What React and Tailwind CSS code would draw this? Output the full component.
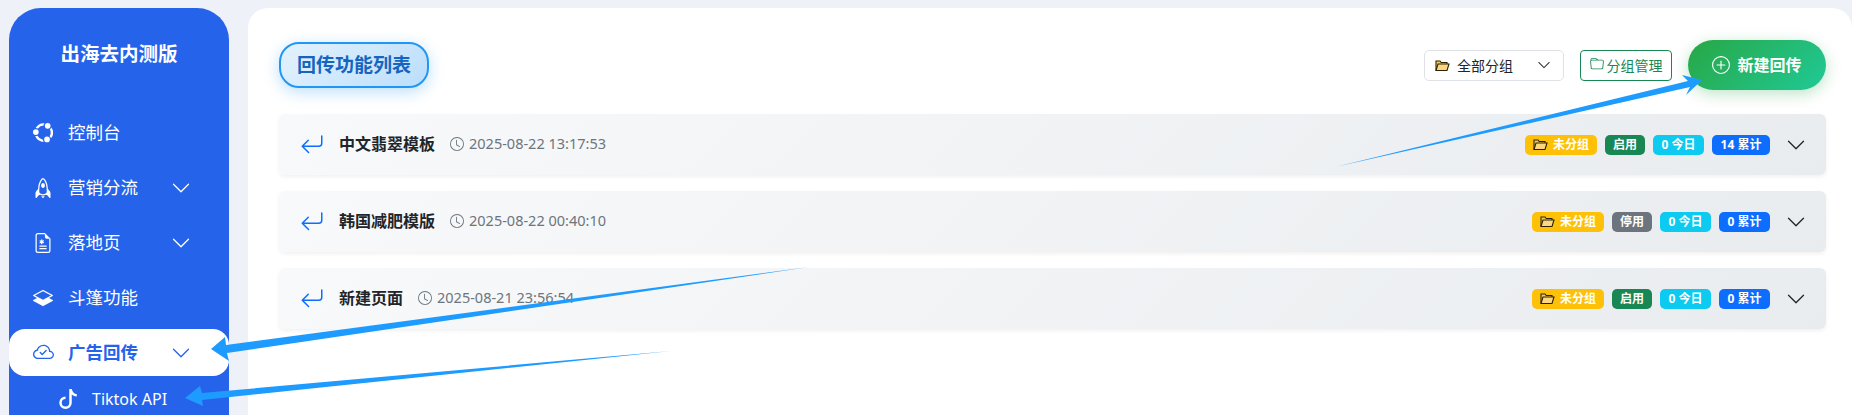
import {
  BsUbuntu,
  BsRocket,
  BsFileEarmarkMedical,
  BsLayersHalf,
  BsCloudCheck,
  BsChevronDown,
  BsTiktok,
  BsArrowReturnLeft,
  BsClock,
  BsFolder,
  BsPlusCircle,
} from "react-icons/bs";

const menu = [
  { label: "控制台", icon: BsUbuntu },
  { label: "营销分流", icon: BsRocket, arrow: true },
  { label: "落地页", icon: BsFileEarmarkMedical, arrow: true },
  { label: "斗篷功能", icon: BsLayersHalf },
];

const rows = [
  { name: "中文翡翠模板", time: "2025-08-22 13:17:53", on: true, today: 0, total: 14 },
  { name: "韩国减肥模版", time: "2025-08-22 00:40:10", on: false, today: 0, total: 0 },
  { name: "新建页面", time: "2025-08-21 23:56:54", on: true, today: 0, total: 0 },
];

// Colour folder, stands in for the emoji in the original
function FolderIcon() {
  return (
    <svg width="15" height="13" viewBox="0 0 15 13" className="shrink-0">
      <path d="M1 11.5V2h4l1.2 1.5H12V5" fill="#f6c95f" stroke="#2a2208" strokeWidth="1.1" />
      <path d="M1 11.5 3 5h11l-2 6.5z" fill="#fdd77e" stroke="#2a2208" strokeWidth="1.1" />
    </svg>
  );
}

function Badge({ className, children }) {
  return (
    <span className={`flex h-[20px] items-center justify-center gap-[5px] rounded-[5px] text-[12px] font-bold text-white ${className}`}>
      {children}
    </span>
  );
}

function Row({ row }) {
  return (
    <div className="flex h-[61px] items-center rounded-[6px] bg-[linear-gradient(135deg,#f8f9fa,#e9ecef)] pl-[21px] pr-[20px] shadow-[0_2px_4px_rgba(0,0,0,0.06)]">
      <BsArrowReturnLeft className="h-[24px] w-[24px] text-[#0d6efd]" />
      <span className="mb-[2px] ml-[15px] text-[16px] font-semibold text-[#212529]">{row.name}</span>
      <span className="mb-[2px] ml-[15px] flex items-center gap-[5px] text-[14.5px] text-[#6c757d]">
        <BsClock className="h-[14px] w-[14px]" />
        {row.time}
      </span>
      <div className="ml-auto flex items-center gap-[8px]">
        <Badge className="w-[72px] bg-[#ffc107]">
          <FolderIcon />
          未分组
        </Badge>
        <Badge className={row.on ? "w-[40px] bg-[#198754]" : "w-[40px] bg-[#6c757d]"}>{row.on ? "启用" : "停用"}</Badge>
        <Badge className="w-[51px] bg-[#0dcaf0]">{row.today} 今日</Badge>
        <Badge className={row.total > 9 ? "w-[58px] bg-[#0d6efd]" : "w-[51px] bg-[#0d6efd]"}>{row.total} 累计</Badge>
        <BsChevronDown className="ml-[8px] h-[20px] w-[20px] text-[#212529]" />
      </div>
    </div>
  );
}

export default function App() {
  return (
    <div className="relative flex h-screen overflow-hidden bg-[#eef1f8] pl-[9px] pt-[8px] font-['Noto_Sans','Noto_Sans_CJK_SC',sans-serif]">
      {/* Sidebar */}
      <aside className="h-[600px] w-[220px] shrink-0 rounded-[32px] bg-[#2563eb] text-white">
        <div className="flex h-[92px] items-center justify-center pb-[1px] text-[19.5px] font-bold">出海去内测版</div>
        <nav className="mt-[9px] flex flex-col gap-[8px]">
          {menu.map((item) => (
            <div key={item.label} className="flex h-[47px] items-center pl-[24px] pr-[38px]">
              <item.icon className="h-[20px] w-[20px] shrink-0" />
              <span className="mb-[1px] ml-[15px] text-[17.5px]">{item.label}</span>
              {item.arrow && <BsChevronDown className="ml-auto h-[20px] w-[20px]" />}
            </div>
          ))}
          <div className="flex h-[47px] items-center rounded-[16px] bg-white pl-[24px] pr-[38px] text-[#2563eb]">
            <BsCloudCheck className="h-[21px] w-[21px] shrink-0" />
            <span className="mb-[1px] ml-[14px] text-[17.5px] font-bold">广告回传</span>
            <BsChevronDown className="ml-auto h-[20px] w-[20px]" />
          </div>
        </nav>
        <div className="flex h-[46px] items-center pl-[49px]">
          <BsTiktok className="h-[20px] w-[20px]" />
          <span className="ml-[14px] text-[16px]">Tiktok API</span>
        </div>
      </aside>

      {/* Main panel */}
      <main className="ml-[19px] h-[600px] flex-1 rounded-t-[20px] bg-white pl-[31px] pr-[26px]">
        <div className="flex h-[106px] items-center pt-[8px]">
          <div className="flex h-[46px] w-[150px] items-center justify-center rounded-[20px] border-2 border-[#2196f3] bg-[linear-gradient(135deg,#e3f2fd,#bbdefb)] text-[19px] font-bold text-[#1565c0] shadow-[0_4px_15px_rgba(33,150,243,0.3)]">
            回传功能列表
          </div>
          <div className="ml-auto flex h-[31px] w-[140px] items-center rounded-[5px] border border-[#dee2e6] pl-[10px] pr-[12px] text-[14px] text-[#212529]">
            <FolderIcon />
            <span className="ml-[7px]">全部分组</span>
            <BsChevronDown className="ml-auto h-[14px] w-[14px]" />
          </div>
          <div className="ml-[16px] flex h-[31px] w-[92px] items-center justify-center gap-[3px] rounded-[4px] border border-[#198754] text-[14px] text-[#198754]">
            <BsFolder className="mb-[3px] h-[14px] w-[14px]" />
            分组管理
          </div>
          <div className="ml-[16px] flex h-[50px] w-[138px] items-center justify-center gap-[7px] rounded-full bg-[linear-gradient(135deg,#28a745,#20c997)] text-[16px] font-bold text-white shadow-[0_4px_15px_rgba(40,167,69,0.3)]">
            <BsPlusCircle className="h-[18px] w-[18px]" />
            新建回传
          </div>
        </div>
        <div className="flex flex-col gap-[16px]">
          {rows.map((row) => (
            <Row key={row.name} row={row} />
          ))}
        </div>
      </main>

      {/* Annotation arrows drawn over the screenshot */}
      <svg className="pointer-events-none absolute left-0 top-0" width="1852" height="415" viewBox="0 0 1852 415">
        <polygon points="1335,167 1688,81 1682,75 1702,80 1686,95 1690,87" fill="#1e9bff" />
        <polygon points="809,267 226,345 225,337 211,349 229,361 227,353" fill="#1e9bff" />
        <polygon points="671,351 202,393 200,386 185,398 203,406 202,400" fill="#1e9bff" />
      </svg>
    </div>
  );
}
